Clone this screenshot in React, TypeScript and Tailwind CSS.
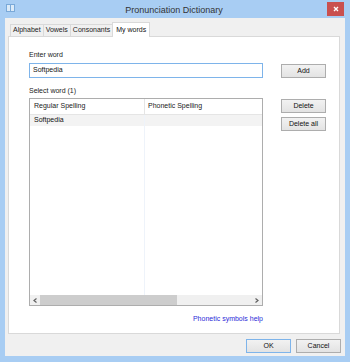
const font = { fontFamily: '"Liberation Sans", Arial, sans-serif' };

const Tab = ({ label, active }: { label: string; active?: boolean }) => (
  <div
    className={
      active
        ? "h-[15px] px-[3px] bg-white border border-[#d9d9d9] border-b-0 -mb-px relative z-10 flex items-start pt-[2px] text-[7px] text-[#111]"
        : "h-[12px] px-[2px] bg-[#f0f0f0] border border-[#d9d9d9] border-b-0 -mr-px flex items-center text-[7px] text-[#222]"
    }
  >
    {label}
  </div>
);

const Button = ({ label, def, className = "" }: { label: string; def?: boolean; className?: string }) => (
  <div
    className={`h-[14px] w-[45px] flex items-center justify-center text-[7px] text-[#111] border bg-gradient-to-b from-[#f2f2f2] to-[#e3e3e3] ${
      def ? "border-[#7eb4ea]" : "border-[#adadad]"
    } ${className}`}
  >
    {label}
  </div>
);

export default function App() {
  return (
    <div className="w-[350px] h-[362px] bg-[#a8cdf3] flex flex-col" style={font}>
      {/* title bar */}
      <div className="h-[18px] flex items-start relative">
        <svg className="ml-[6px] mt-[4px]" width="9" height="8" viewBox="0 0 9 8">
          <rect x="0.5" y="0.5" width="8" height="7" fill="#dbeaf8" stroke="#7aa9d8" />
          <line x1="4.5" y1="1" x2="4.5" y2="7" stroke="#7aa9d8" />
        </svg>
        <div className="flex-1 text-center text-[9px] text-[#333] pt-[4px] pl-[6px]">Pronunciation Dictionary</div>
        <div className="w-[17px] h-[14px] mt-[2px] mr-[6px] bg-[#c9504f] flex items-center justify-center">
          <svg width="6" height="6" viewBox="0 0 6 6">
            <path d="M1 1L5 5M5 1L1 5" stroke="#fff" strokeWidth="1.4" />
          </svg>
        </div>
      </div>

      {/* client */}
      <div className="mx-[5px] mb-[6px] flex-1 bg-[#f0f0f0] flex flex-col">
        <div className="flex items-end pl-[5px] pt-[4px]">
          <Tab label="Alphabet" />
          <Tab label="Vowels" />
          <Tab label="Consonants" />
          <Tab label="My words" active />
        </div>

        <div className="ml-[3px] mr-[5px] h-[298px] bg-white border border-[#d9d9d9] flex flex-col pl-[20px]">
          <div className="mt-[13px] text-[7px] text-[#222] leading-[10px]">Enter word</div>
          <div className="mt-[3px] flex items-start">
            <div className="w-[234px] h-[15px] border border-[#7eb4ea] flex items-center pl-[3px] text-[7px] text-[#111]">
              Softpedia
            </div>
            <Button label="Add" className="ml-[18px] mt-[1px]" />
          </div>

          <div className="mt-[8px] text-[7px] text-[#222] leading-[10px]">Select word (1)</div>
          <div className="mt-[2px] flex items-start">
            <div className="w-[234px] h-[208px] border border-[#adadad] flex flex-col">
              <div className="h-[16px] flex border-b border-[#e5e5e5] text-[7px] text-[#222]">
                <div className="w-[115px] border-r border-[#e5e5e5] flex items-center pl-[4px]">Regular Spelling</div>
                <div className="flex items-center pl-[3px]">Phonetic Spelling</div>
              </div>
              <div className="flex-1 flex">
                <div className="w-[115px] border-r border-[#eef3fa]">
                  <div className="h-[11px] bg-[#f3f3f3] flex items-center pl-[4px] text-[7px] text-[#111]">Softpedia</div>
                </div>
                <div className="flex-1">
                  <div className="h-[11px] bg-[#f3f3f3]" />
                </div>
              </div>
              {/* horizontal scrollbar */}
              <div className="h-[10px] flex bg-[#f0f0f0]">
                <div className="w-[10px] flex items-center justify-center">
                  <svg width="4" height="5" viewBox="0 0 4 5">
                    <path d="M3.5 0.5L1 2.5L3.5 4.5" stroke="#606060" strokeWidth="1.2" fill="none" />
                  </svg>
                </div>
                <div className="w-[137px] bg-[#cdcdcd]" />
                <div className="flex-1" />
                <div className="w-[10px] flex items-center justify-center">
                  <svg width="4" height="5" viewBox="0 0 4 5">
                    <path d="M0.5 0.5L3 2.5L0.5 4.5" stroke="#606060" strokeWidth="1.2" fill="none" />
                  </svg>
                </div>
              </div>
            </div>
            <div className="ml-[18px] mt-[1px] flex flex-col gap-[4px]">
              <Button label="Delete" />
              <Button label="Delete all" />
            </div>
          </div>

          <div className="w-[234px] mt-[8px] text-right text-[7px] text-[#2b2bd8] leading-[10px]">Phonetic symbols help</div>
        </div>

        <div className="flex justify-end gap-[5px] pr-[4px] mt-[5px]">
          <Button label="OK" def />
          <Button label="Cancel" />
        </div>
      </div>
    </div>
  );
}
